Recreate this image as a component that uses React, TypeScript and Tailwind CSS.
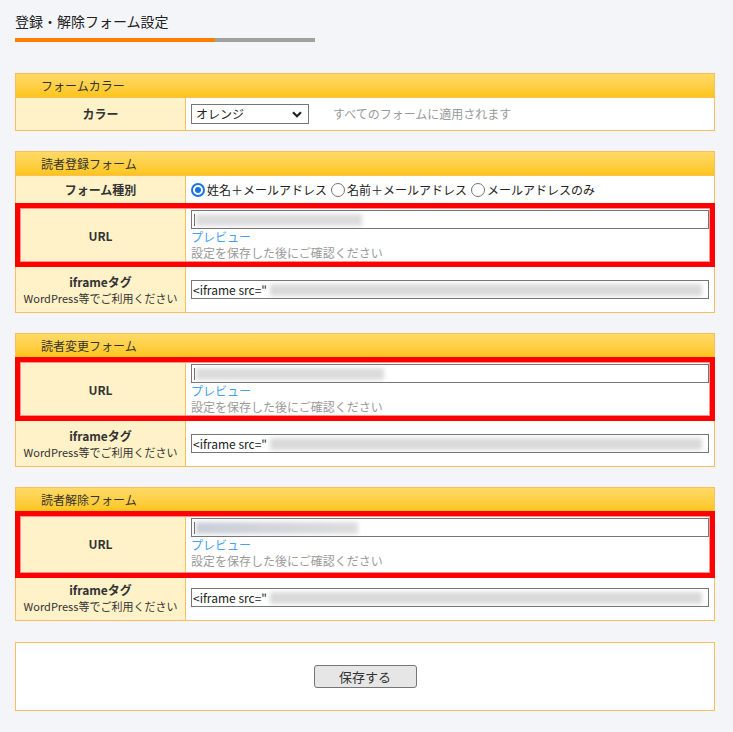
import React from 'react';

const border = 'border-[#fbbe5e]';

const Section = ({ title, children }: { title: string; children: React.ReactNode }) => (
  <div className={`border ${border} bg-white`}>
    <div className={`h-[24px] bg-gradient-to-b from-[#ffda66] to-[#fdc512] border-b ${border} pl-[25px] text-[12px] leading-[23px] text-[#333]`}>
      {title}
    </div>
    {children}
  </div>
);

const Row = ({
  label,
  sub,
  h,
  first = false,
  children,
}: {
  label: string;
  sub?: string;
  h: string;
  first?: boolean;
  children: React.ReactNode;
}) => (
  <div className={`flex ${h} ${first ? '' : `border-t ${border}`}`}>
    <div className={`w-[170px] shrink-0 bg-[#fff1c8] border-r ${border} flex flex-col items-center justify-center`}>
      <div className="text-[12px] leading-[16px] font-bold text-[#333]">{label}</div>
      {sub && <div className="text-[11px] leading-[16px] text-[#333]">{sub}</div>}
    </div>
    <div className="flex-1 min-w-0 px-[5px]">{children}</div>
  </div>
);

// red annotation frame drawn over the URL rows
const Highlight = ({ bottom }: { bottom: string }) => (
  <div className={`absolute -left-[1px] -right-[1px] -top-[1px] ${bottom} border-[5px] border-[#ff0000] shadow-[inset_0_0_0_1px_#ff8f8f] pointer-events-none`} />
);

const UrlRow = ({ blurW, bottom, tint }: { blurW: string; bottom: string; tint?: boolean }) => (
  <div className="relative">
    <Row label="URL" h="h-[62px]">
      <div className="pt-[5px]">
        <div className="relative h-[19px] border border-[#767676] overflow-hidden">
          <div className="absolute left-[2px] top-[3px] w-[1px] h-[12px] bg-[#555]" />
          <div
            className={`absolute left-[4px] top-[3px] h-[12px] ${blurW} ${tint ? 'bg-gradient-to-r from-[#c9ced8] to-[#dedede]' : 'bg-[#dcdcdc]'} blur-[2px]`}
          />
        </div>
        <div className="text-[12px] leading-[16px] text-[#46a0f0]">プレビュー</div>
        <div className="text-[12px] leading-[16px] text-[#9a9a9a]">設定を保存した後にご確認ください</div>
      </div>
    </Row>
    <Highlight bottom={bottom} />
  </div>
);

const IframeRow = () => (
  <Row label="iframeタグ" sub="WordPress等でご利用ください" h="h-[46px]">
    <div className="h-full flex items-center">
      <div className="relative w-full h-[19px] border border-[#767676] overflow-hidden text-[12px] leading-[17px] text-[#222] pl-[1px]">
        &lt;iframe src="
        <div className="absolute left-[78px] right-[6px] top-[3px] h-[12px] bg-[#dadada] blur-[2px]" />
      </div>
    </div>
  </Row>
);

const Radio = ({ checked }: { checked?: boolean }) =>
  checked ? (
    <span className="w-[14px] h-[14px] rounded-full border-[2px] border-[#1a73e8] flex items-center justify-center shrink-0">
      <span className="w-[6px] h-[6px] rounded-full bg-[#1a73e8]" />
    </span>
  ) : (
    <span className="w-[14px] h-[14px] rounded-full border border-[#767676] bg-white shrink-0" />
  );

export default function App() {
  return (
    <div className="min-h-screen bg-[#f4f5f9] font-['Noto_Sans_CJK_JP','Noto_Sans',sans-serif] text-[#333]">
      <div className="w-[700px] ml-[15px] pt-[11px] pb-[21px]">
        <h1 className="text-[14px] leading-[20px] font-normal text-[#222]">登録・解除フォーム設定</h1>
        <div className="flex mt-[7px] h-[4px]">
          <div className="w-[200px] bg-[#ff7d00]" />
          <div className="w-[100px] bg-[#a0a0a0]" />
        </div>

        <div className="mt-[31px]">
          <Section title="フォームカラー">
            <Row label="カラー" h="h-[32px]" first>
              <div className="h-full flex items-center">
                <div className="w-[118px] h-[20px] border border-[#767676] flex items-center justify-between pl-[4px] pr-[6px] text-[12px] text-[#222]">
                  オレンジ
                  <svg width="10" height="7" viewBox="0 0 10 7">
                    <path d="M1 1.2 L5 5.2 L9 1.2" fill="none" stroke="#222" strokeWidth="2.2" />
                  </svg>
                </div>
                <span className="ml-[24px] text-[12px] text-[#9a9a9a]">すべてのフォームに適用されます</span>
              </div>
            </Row>
          </Section>
        </div>

        <div className="mt-[20px]">
          <Section title="読者登録フォーム">
            <Row label="フォーム種別" h="h-[28px]" first>
              <div className="h-full flex items-center gap-[2px] text-[12px] text-[#222]">
                <Radio checked />
                <span className="mr-[2px]">姓名＋メールアドレス</span>
                <Radio />
                <span className="mr-[2px]">名前＋メールアドレス</span>
                <Radio />
                <span>メールアドレスのみ</span>
              </div>
            </Row>
            <UrlRow blurW="w-[166px]" bottom="-bottom-[1px]" />
            <IframeRow />
          </Section>
        </div>

        <div className="mt-[20px]">
          <Section title="読者変更フォーム">
            <UrlRow blurW="w-[188px]" bottom="-bottom-[1px]" />
            <IframeRow />
          </Section>
        </div>

        <div className="mt-[20px]">
          <Section title="読者解除フォーム">
            <UrlRow blurW="w-[162px]" bottom="-bottom-[4px]" tint />
            <IframeRow />
          </Section>
        </div>

        <div className={`mt-[21px] h-[69px] border ${border} bg-white flex items-center justify-center`}>
          <button className="w-[103px] h-[23px] rounded-[3px] border border-[#767676] bg-[#e6e6e6] text-[13px] text-[#333]">
            保存する
          </button>
        </div>
      </div>
    </div>
  );
}
